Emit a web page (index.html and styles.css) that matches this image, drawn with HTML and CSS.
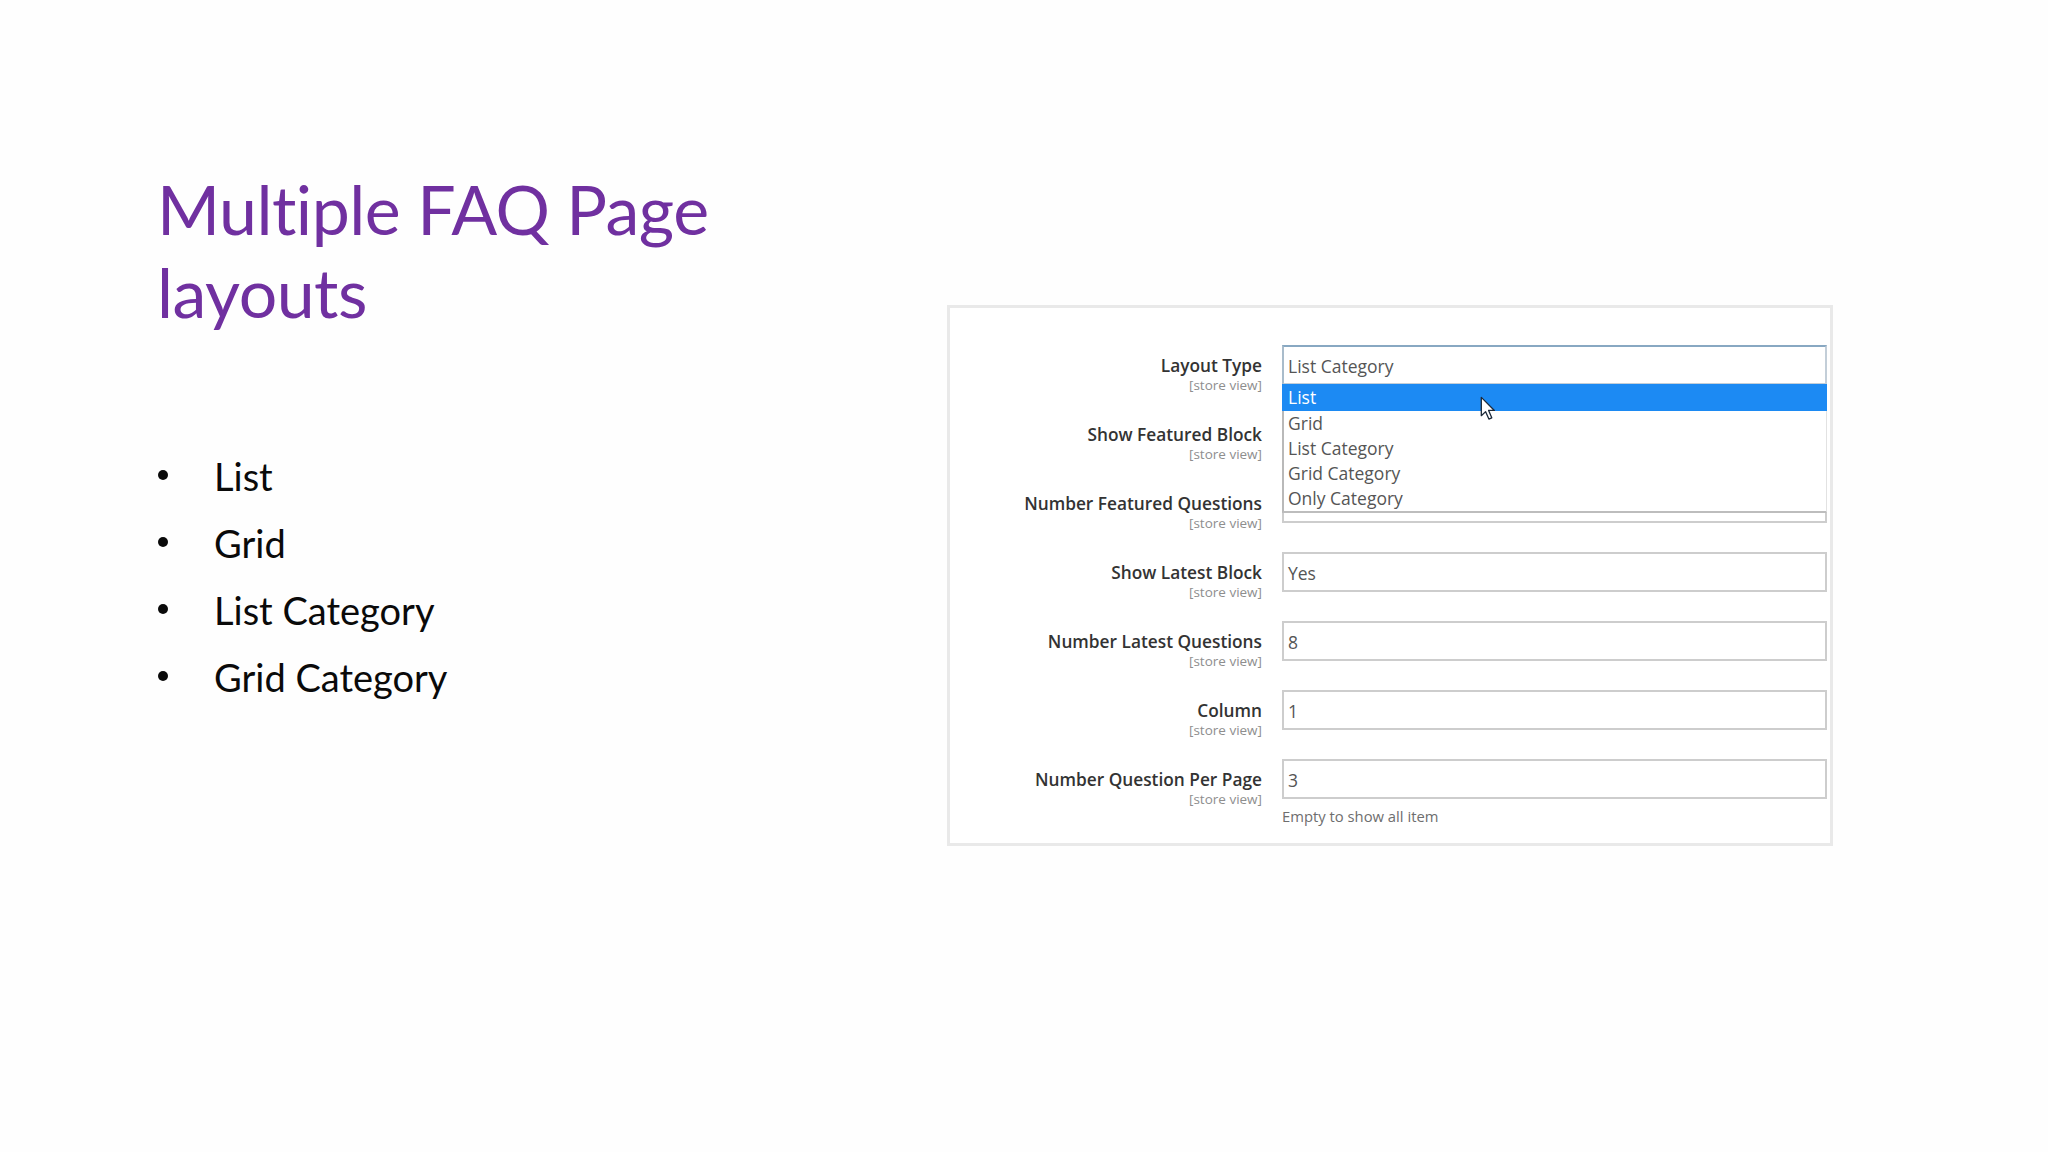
FILE: index.html
```html
<!DOCTYPE html>
<html lang="en">
<head>
<meta charset="utf-8">
<title>Multiple FAQ Page layouts</title>
<link rel="stylesheet" href="styles.css">
</head>
<body>
<div class="slide">
  <div class="left">
    <h1 class="title">Multiple FAQ Page<br>layouts</h1>
    <ul class="bullets">
      <li><span class="dot"></span><span>List</span></li>
      <li><span class="dot"></span><span>Grid</span></li>
      <li><span class="dot"></span><span>List Category</span></li>
      <li><span class="dot"></span><span>Grid Category</span></li>
    </ul>
  </div>
  <div class="panel">
    <div class="row">
      <div class="label"><div class="name">Layout Type</div><div class="scope">[store view]</div></div>
      <div class="field">
        <div class="input select">List Category
          <div class="dropdown">
            <div class="opt active">List</div>
            <div class="opt">Grid</div>
            <div class="opt">List Category</div>
            <div class="opt">Grid Category</div>
            <div class="opt">Only Category</div>
            <svg class="cursor" width="17" height="25" viewBox="0 0 13 19"><path d="M1 1 L1 15 L4.3 11.9 L6.8 17.6 L9 16.6 L6.6 11 L11 11 Z" fill="#fff" stroke="#1d2a3a" stroke-width="1" stroke-linejoin="round"/></svg>
          </div>
        </div>
      </div>
    </div>
    <div class="row">
      <div class="label"><div class="name">Show Featured Block</div><div class="scope">[store view]</div></div>
      <div class="field"><div class="input"></div></div>
    </div>
    <div class="row">
      <div class="label"><div class="name">Number Featured Questions</div><div class="scope">[store view]</div></div>
      <div class="field"><div class="input"></div></div>
    </div>
    <div class="row">
      <div class="label"><div class="name">Show Latest Block</div><div class="scope">[store view]</div></div>
      <div class="field"><div class="input">Yes</div></div>
    </div>
    <div class="row">
      <div class="label"><div class="name">Number Latest Questions</div><div class="scope">[store view]</div></div>
      <div class="field"><div class="input">8</div></div>
    </div>
    <div class="row">
      <div class="label"><div class="name">Column</div><div class="scope">[store view]</div></div>
      <div class="field"><div class="input">1</div></div>
    </div>
    <div class="row">
      <div class="label"><div class="name">Number Question Per Page</div><div class="scope">[store view]</div></div>
      <div class="field"><div class="input">3</div><div class="note">Empty to show all item</div></div>
    </div>
  </div>
</div>
</body>
</html>
```
FILE: styles.css
```css
html, body {
  margin: 0;
  padding: 0;
  background: #fefefe;
}
.slide {
  width: 2048px;
  height: 1152px;
  display: flex;
  align-items: flex-start;
  padding-left: 157px;
  box-sizing: border-box;
  overflow: hidden;
}
.left {
  width: 790px;
  flex: none;
}
.title {
  margin: 167px 0 0 0;
  font-family: Lato, "Open Sans", sans-serif;
  font-weight: 400;
  font-size: 68px;
  line-height: 83px;
  color: #7030a0;
  letter-spacing: -0.5px;
}
.bullets {
  list-style: none;
  margin: 110px 0 0 0;
  padding: 0;
  font-family: Lato, "Open Sans", sans-serif;
  font-size: 38px;
  line-height: 67px;
  color: #0a0a0a;
}
.bullets li {
  display: flex;
  align-items: flex-start;
}
.dot {
  width: 10px;
  height: 10px;
  border-radius: 50%;
  background: #0a0a0a;
  margin: 27px 46px 0 1px;
  flex: none;
}
.panel {
  width: 886px;
  height: 541px;
  margin-top: 305px;
  border: 3px solid #e9e9e9;
  box-sizing: border-box;
  background: #ffffff;
  padding: 37px 3px 0 0;
  display: flex;
  flex-direction: column;
  gap: 29px;
  font-family: "Open Sans", sans-serif;
}
.row {
  display: grid;
  grid-template-columns: 312px 545px;
  column-gap: 20px;
}
.label {
  height: 40px;
  box-sizing: border-box;
  text-align: right;
  padding-top: 11px;
}
.name {
  font-size: 17.3px;
  line-height: 20px;
  font-weight: 600;
  color: #333333;
}
.scope {
  margin-top: 1px;
  font-size: 13.5px;
  line-height: 16px;
  color: #8e8e8e;
}
.field {
  position: relative;
}
.input {
  height: 40px;
  box-sizing: border-box;
  border: 2px solid #cdcdcd;
  padding: 3px 0 0 4px;
  font-size: 17.5px;
  line-height: 32px;
  color: #555555;
  background: #ffffff;
}
.select {
  position: relative;
  border-color: #c3ced8;
  border-top-color: #88a8c2;
  border-left-color: #a9bccb;
  z-index: 2;
}
.dropdown {
  position: absolute;
  top: 37px;
  left: -2px;
  right: -2px;
  background: #ffffff;
  border-left: 2px solid #b9b9b9;
  border-right: 1px solid #e2e2e2;
  border-bottom: 2px solid #bdbdbd;
  box-sizing: border-box;
}
.opt {
  padding-left: 4px;
  font-size: 17.5px;
  line-height: 25px;
  color: #555555;
}
.opt.active {
  line-height: 27px;
  background: #1c8af3;
  color: #ffffff;
  margin-left: -2px;
  padding-left: 6px;
  margin-right: -1px;
}
.cursor {
  position: absolute;
  left: 196px;
  top: 12px;
}
.note {
  margin-top: 7px;
  font-size: 14.8px;
  line-height: 20px;
  color: #6e6e6e;
}
```
